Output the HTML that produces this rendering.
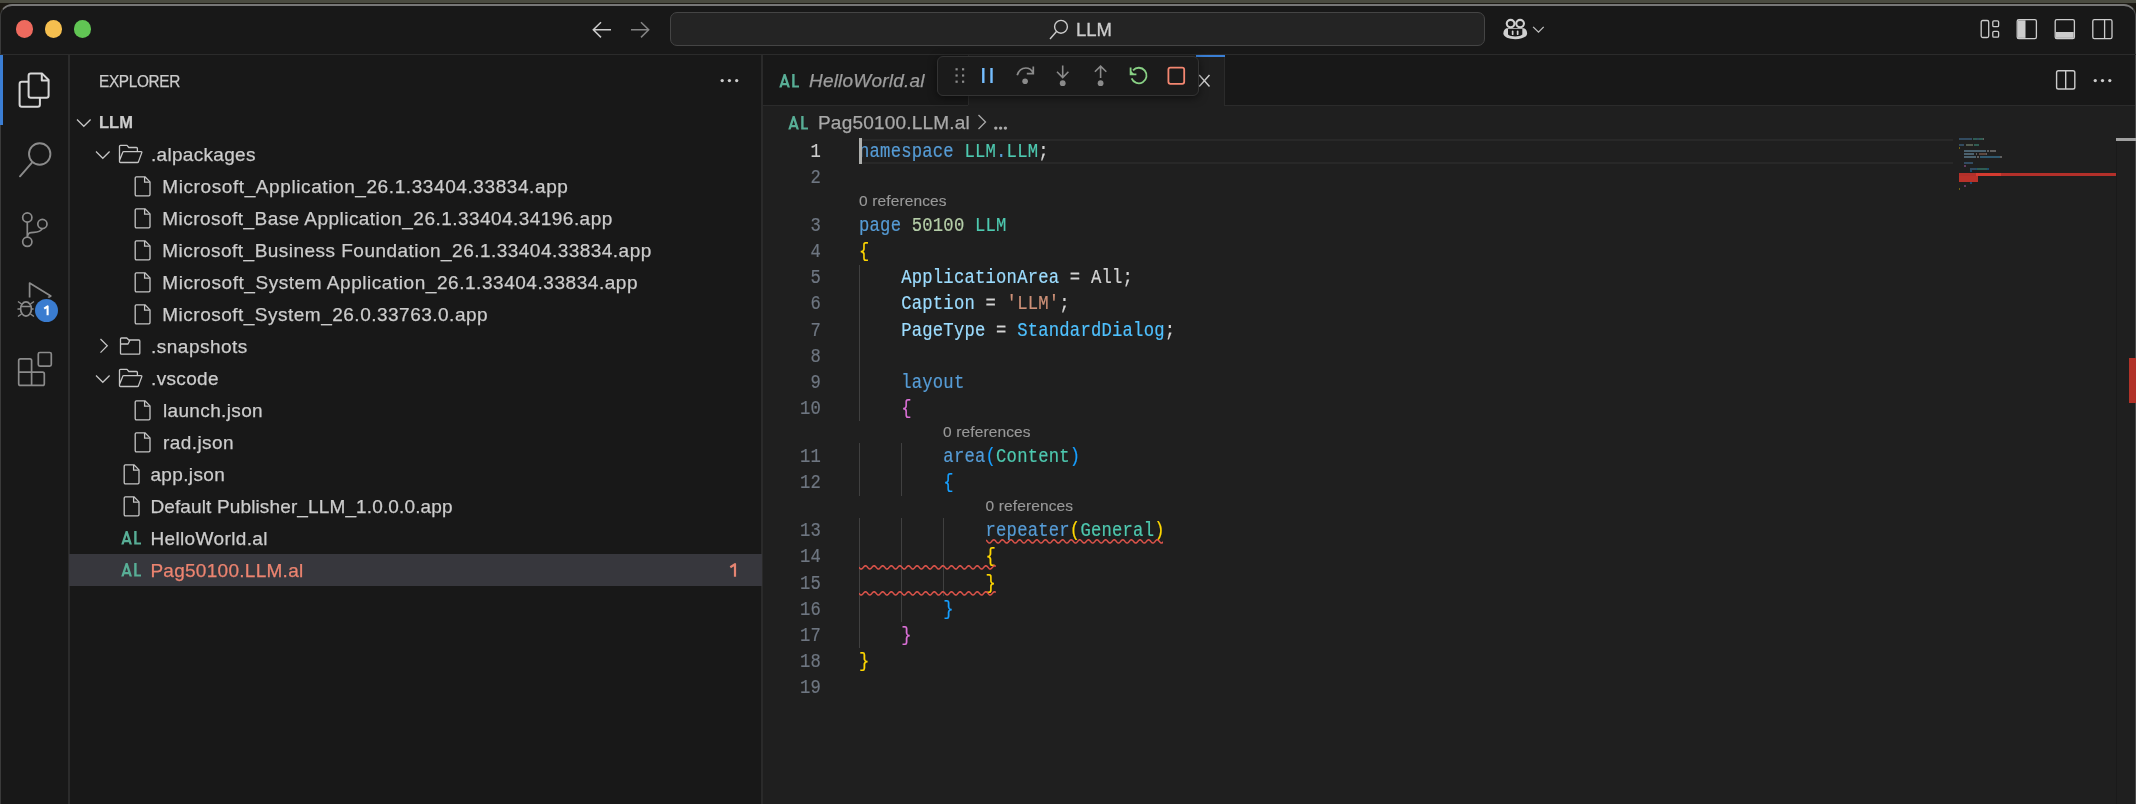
<!DOCTYPE html>
<html><head><meta charset="utf-8">
<style>
*{box-sizing:border-box;margin:0;padding:0}
html,body{width:2136px;height:804px;overflow:hidden;background:#4a4b40}
body{position:relative;font-family:"Liberation Sans",sans-serif;color:#cccccc}
.abs{position:absolute}
.etext{-webkit-text-stroke:0.25px currentColor;margin-top:0.6px;height:32px;line-height:32px;font-size:19px;letter-spacing:0.45px;white-space:nowrap;color:#cccccc}
.err{color:#ec8470}
.alsvg{fill:#58ae96}

#win{position:absolute;left:0;top:4px;width:2136px;height:820px;background:#181818;border-radius:12px 12px 0 0;border-top:2px solid #777777;border-left:1.5px solid #3a3a3a;border-right:1.5px solid #4a4a4a;overflow:hidden}
#edge{position:absolute;left:0;top:2.6px;width:2136px;height:14px;background:#1c1a14}
svg{position:absolute;overflow:visible}
.row{position:absolute;left:69px;width:693px;height:32px;line-height:32px;font-size:19px;letter-spacing:0.45px;white-space:nowrap;color:#cccccc}
.row span.t{position:absolute;top:0}
.code{-webkit-text-stroke:0.2px currentColor;position:absolute;left:0;height:26.13px;line-height:26.13px;margin-top:0.8px;font-family:"Liberation Mono",monospace;font-size:20px;letter-spacing:0.256px;white-space:pre;color:#d4d4d4;transform:scaleX(0.86);transform-origin:0 0}
.ln{-webkit-text-stroke:0.2px currentColor;position:absolute;left:721px;width:100px;text-align:right;height:26.13px;line-height:26.13px;margin-top:0.8px;font-family:"Liberation Mono",monospace;font-size:20px;letter-spacing:0.256px;color:#6e7681;transform:scaleX(0.86);transform-origin:100% 0}
.lens{-webkit-text-stroke:0.15px currentColor;position:absolute;height:22px;line-height:22px;margin-top:-0.3px;font-size:15.5px;letter-spacing:0.13px;color:#999999;white-space:nowrap}
.kw{color:#569cd6}.ty{color:#4ec9b0}.nu{color:#b5cea8}.pr{color:#9cdcfe}.st{color:#ce9178}.en{color:#4fc1ff}
.b1{color:#ffd700}.b2{color:#da70d6}.b3{color:#179fff}
.guide{position:absolute;width:1px;background:#404040}
.ln.act{color:#cccccc}
</style></head><body>
<div id="edge"></div>
<div id="win">
</div>
<div id="ui" class="abs" style="left:0;top:0;width:2136px;height:804px;will-change:transform">
  <!-- title bar border -->
  <div class="abs" style="left:0;top:54px;width:2136px;height:1px;background:#2b2b2b"></div>
  <!-- activity bar border -->
  <div class="abs" style="left:68px;top:55px;width:1.5px;height:749px;background:#2b2b2b"></div>
  <!-- sidebar border -->
  <div class="abs" style="left:761px;top:55px;width:2px;height:749px;background:#2a2a2a"></div>
  <!-- editor bg -->
  <div class="abs" style="left:763px;top:105px;width:1371.5px;height:699px;background:#1f1f1f"></div>
  <!-- tab bar bottom border -->
  <div class="abs" style="left:763px;top:105px;width:1371.5px;height:1px;background:#2b2b2b"></div>

  
  <!-- traffic lights -->
  <div class="abs" style="left:15.8px;top:20.2px;width:17.6px;height:17.6px;border-radius:50%;background:#ee6a5e"></div>
  <div class="abs" style="left:44.9px;top:20.2px;width:17.6px;height:17.6px;border-radius:50%;background:#f5bf4f"></div>
  <div class="abs" style="left:73.9px;top:20.2px;width:17.6px;height:17.6px;border-radius:50%;background:#61c554"></div>
  <!-- nav arrows -->
  <svg style="left:590px;top:20px" width="24" height="20" viewBox="0 0 24 20"><path d="M21 9.8H3.5M11 2.2L3.3 9.8L11 17.4" fill="none" stroke="#cccccc" stroke-width="1.5"/></svg>
  <svg style="left:628px;top:20px" width="24" height="20" viewBox="0 0 24 20"><path d="M3 9.8H20.5M13 2.2L20.7 9.8L13 17.4" fill="none" stroke="#858585" stroke-width="1.5"/></svg>
  <!-- search box -->
  <div class="abs" style="left:670px;top:12px;width:815px;height:34px;border-radius:7px;border:1px solid #454545;background:#242424"></div>
  <svg style="left:1046px;top:16.6px" width="24" height="26" viewBox="0 0 24 26"><circle cx="15" cy="9.8" r="6.4" fill="none" stroke="#cccccc" stroke-width="1.4"/><path d="M10.5 14.5L4 22" stroke="#cccccc" stroke-width="1.4"/></svg>
  <div class="abs" style="left:1076px;top:12.7px;height:34px;line-height:34px;font-size:18.5px;color:#cccccc;letter-spacing:-0.1px;-webkit-text-stroke:0.3px #cccccc">LLM</div>
  <!-- copilot -->
  <svg style="left:1500px;top:16px" width="50" height="26" viewBox="0 0 50 26">
    <path d="M6.50 12.30L23.80 12.30C26.00 13.00 27.10 15.00 27.10 17.50C27.10 21.00 21.50 23.20 15.30 23.20C9.00 23.20 3.40 21.00 3.40 17.50C3.40 15.00 4.50 13.00 6.50 12.30Z" fill="#d0d0d0"/>
    <path d="M8.00 13.10H22.30V18.50C20.50 20.00 18.00 20.40 15.20 20.40C12.40 20.40 9.80 20.00 8.00 18.50Z" fill="#181818"/>
    <rect x="11.80" y="14.60" width="1.7" height="4.5" rx="0.85" fill="#d0d0d0"/>
    <rect x="16.80" y="14.60" width="1.7" height="4.5" rx="0.85" fill="#d0d0d0"/>
    <ellipse cx="10.60" cy="7.60" rx="3.85" ry="3.7" fill="none" stroke="#d0d0d0" stroke-width="2.1"/>
    <ellipse cx="20.10" cy="7.60" rx="3.85" ry="3.7" fill="none" stroke="#d0d0d0" stroke-width="2.1"/>
    <path d="M33.10 10.90L38.50 16.10L43.70 10.90" fill="none" stroke="#c0c0c0" stroke-width="1.3"/>
  </svg>
  <!-- layout icons -->
  <svg style="left:1978px;top:17px" width="140" height="26" viewBox="0 0 140 26">
    <rect x="3.2" y="3.5" width="7.5" height="17" rx="1.5" fill="none" stroke="#cccccc" stroke-width="1.3"/>
    <rect x="14.8" y="3.8" width="5.8" height="5.8" rx="1.2" fill="none" stroke="#cccccc" stroke-width="1.3"/>
    <rect x="14.8" y="14.3" width="5.8" height="5.8" rx="1.2" fill="none" stroke="#cccccc" stroke-width="1.3"/>
    <rect x="39.2" y="2.6" width="19.2" height="19" rx="1.6" fill="none" stroke="#cccccc" stroke-width="1.3"/>
    <path d="M40 3.3H47.5V20.9H40Z" fill="#cccccc"/>
    <rect x="77.2" y="2.6" width="19.2" height="19" rx="1.6" fill="none" stroke="#cccccc" stroke-width="1.3"/>
    <path d="M77.9 15H95.7V20.9H77.9Z" fill="#cccccc"/>
    <rect x="114.8" y="2.6" width="19.2" height="19" rx="1.6" fill="none" stroke="#cccccc" stroke-width="1.3"/>
    <path d="M126.6 3V21" stroke="#cccccc" stroke-width="1.3"/>
  </svg>


  <!-- activity bar -->
  <div class="abs" style="left:0;top:55px;width:2.5px;height:70px;background:#3b7ed4"></div>
  <svg style="left:0;top:55px" width="68" height="360" viewBox="0 0 68 360">
    <!-- explorer -->
    <path d="M28.6 20.8C28.6 19.5 29.5 18.6 30.8 18.6H42.2L48.6 25V40.6C48.6 41.9 47.7 42.8 46.4 42.8H30.8C29.5 42.8 28.6 41.9 28.6 40.6Z" fill="none" stroke="#d7d7d7" stroke-width="2" stroke-linejoin="round"/>
    <path d="M41.8 18.9V25.4H48.3" fill="none" stroke="#d7d7d7" stroke-width="2" stroke-linejoin="round"/>
    <path d="M28.6 26.8H21.8C20.5 26.8 19.6 27.7 19.6 29V49.6C19.6 50.9 20.5 51.8 21.8 51.8H37.7C39 51.8 39.9 50.9 39.9 49.6V43" fill="none" stroke="#d7d7d7" stroke-width="2" stroke-linejoin="round"/>
    <!-- search -->
    <circle cx="39.7" cy="99" r="10.7" fill="none" stroke="#8b8b8b" stroke-width="1.9"/>
    <path d="M32.2 107.3L20 121.3" stroke="#8b8b8b" stroke-width="1.9" stroke-linecap="round"/>
    <!-- source control -->
    <circle cx="27.3" cy="162.5" r="4.6" fill="none" stroke="#8b8b8b" stroke-width="1.7"/>
    <circle cx="42.4" cy="169" r="4.6" fill="none" stroke="#8b8b8b" stroke-width="1.7"/>
    <circle cx="27.3" cy="186.8" r="4.6" fill="none" stroke="#8b8b8b" stroke-width="1.7"/>
    <path d="M27.3 167.1V182.2M27.3 182.2C28 177.5 30 177.3 34 177.3C38 177.3 40.5 176.5 42.3 173.6" fill="none" stroke="#8b8b8b" stroke-width="1.7"/>
    <!-- run and debug -->
    <path d="M29.6 242.5V228L50.8 241L48 242.7" fill="none" stroke="#8b8b8b" stroke-width="1.7" stroke-linejoin="round"/>
    <ellipse cx="26" cy="254" rx="5.4" ry="7.2" fill="none" stroke="#8b8b8b" stroke-width="1.7"/>
    <path d="M20.6 251.5H31.4M17.5 254H20.6M31.4 254H34.5M18 246.5L21.5 249M34 246.5L30.5 249M18 261.5L21.5 259M34 261.5L30.5 259" fill="none" stroke="#8b8b8b" stroke-width="1.5"/>
    <!-- extensions -->
    <path d="M18.7 317.2V305.5C18.7 304.5 19.4 303.8 20.4 303.8H29.9C30.9 303.8 31.6 304.5 31.6 305.5V317.2H42.6C43.6 317.2 44.3 317.9 44.3 318.9V328.7C44.3 329.7 43.6 330.4 42.6 330.4H20.4C19.4 330.4 18.7 329.7 18.7 328.7V317.2H31.6V330.4" fill="none" stroke="#8b8b8b" stroke-width="1.7" stroke-linejoin="round"/>
    <rect x="38.3" y="297.5" width="13" height="13.6" rx="1.6" fill="none" stroke="#8b8b8b" stroke-width="1.7"/>
  </svg>
  <div class="abs" style="left:35px;top:299px;width:23px;height:23px;border-radius:50%;background:#3a7cd0;box-shadow:0 0 0 1.5px #181818"></div><svg style="left:35px;top:299px" width="23" height="23" viewBox="0 0 23 23"><path d="M9.2 9.6L12.6 7.4V16.2" fill="none" stroke="#ffffff" stroke-width="2.1" stroke-linejoin="round"/></svg>


  <!-- sidebar -->
  <div class="abs" style="left:98.5px;top:66px;height:32px;line-height:32px;font-size:16.6px;letter-spacing:-0.36px;transform:scaleX(0.925);transform-origin:0 0;color:#cccccc;-webkit-text-stroke:0.25px #cccccc">EXPLORER</div>
  <svg style="left:718px;top:76px" width="24" height="8" viewBox="0 0 24 8"><circle cx="4.2" cy="4.55" r="1.65" fill="#cccccc"/><circle cx="11.4" cy="4.55" r="1.65" fill="#cccccc"/><circle cx="18.7" cy="4.55" r="1.65" fill="#cccccc"/></svg>
  <svg style="left:76.3px;top:117.8px" width="16" height="10" viewBox="0 0 16 10"><path d="M1 1.5L7.8 8.3L14.6 1.5" fill="none" stroke="#c5c5c5" stroke-width="1.25"/></svg>
  <div class="abs etext" style="left:99px;top:105.3px;font-weight:bold;font-size:16.5px;letter-spacing:0px">LLM</div>
  <svg style="left:95px;top:149.7px" width="16" height="10" viewBox="0 0 16 10"><path d="M1 1.5L7.8 8.3L14.6 1.5" fill="none" stroke="#c5c5c5" stroke-width="1.25"/></svg>
  <svg style="left:117px;top:144px" width="27" height="20" viewBox="0 0 27 20"><path d="M2.5 16.5V2.3C2.5 1.7 2.9 1.3 3.5 1.3H10L11.8 3.5H19.4C20 3.5 20.4 3.9 20.4 4.5V7.5M2.5 16.5L5.8 8.2C6 7.9 6.3 7.7 6.7 7.7H24.1C24.7 7.7 25 8.1 24.8 8.6L21.4 17.9C21.2 18.3 20.9 18.5 20.5 18.5H3.5C2.9 18.5 2.5 18.1 2.5 17.5Z" fill="none" stroke="#c5c5c5" stroke-width="1.3" stroke-linejoin="round"/></svg>
  <div class="abs etext " style="left:151.0px;top:138px;letter-spacing:0.310px">.alpackages</div>
  <svg style="left:134px;top:176px" width="18" height="22" viewBox="0 0 18 22"><path d="M1.2 2C1.2 1.3 1.7 0.8 2.4 0.8H10.9L16 5.9V18.6C16 19.3 15.5 19.8 14.8 19.8H2.4C1.7 19.8 1.2 19.3 1.2 18.6Z" fill="none" stroke="#c5c5c5" stroke-width="1.3" stroke-linejoin="round"/><path d="M10.6 1V6.2H15.8" fill="none" stroke="#c5c5c5" stroke-width="1.3"/></svg>
  <div class="abs etext " style="left:162.3px;top:170px;letter-spacing:0.591px">Microsoft_Application_26.1.33404.33834.app</div>
  <svg style="left:134px;top:208px" width="18" height="22" viewBox="0 0 18 22"><path d="M1.2 2C1.2 1.3 1.7 0.8 2.4 0.8H10.9L16 5.9V18.6C16 19.3 15.5 19.8 14.8 19.8H2.4C1.7 19.8 1.2 19.3 1.2 18.6Z" fill="none" stroke="#c5c5c5" stroke-width="1.3" stroke-linejoin="round"/><path d="M10.6 1V6.2H15.8" fill="none" stroke="#c5c5c5" stroke-width="1.3"/></svg>
  <div class="abs etext " style="left:162.3px;top:202px;letter-spacing:0.458px">Microsoft_Base Application_26.1.33404.34196.app</div>
  <svg style="left:134px;top:240px" width="18" height="22" viewBox="0 0 18 22"><path d="M1.2 2C1.2 1.3 1.7 0.8 2.4 0.8H10.9L16 5.9V18.6C16 19.3 15.5 19.8 14.8 19.8H2.4C1.7 19.8 1.2 19.3 1.2 18.6Z" fill="none" stroke="#c5c5c5" stroke-width="1.3" stroke-linejoin="round"/><path d="M10.6 1V6.2H15.8" fill="none" stroke="#c5c5c5" stroke-width="1.3"/></svg>
  <div class="abs etext " style="left:162.3px;top:234px;letter-spacing:0.472px">Microsoft_Business Foundation_26.1.33404.33834.app</div>
  <svg style="left:134px;top:272px" width="18" height="22" viewBox="0 0 18 22"><path d="M1.2 2C1.2 1.3 1.7 0.8 2.4 0.8H10.9L16 5.9V18.6C16 19.3 15.5 19.8 14.8 19.8H2.4C1.7 19.8 1.2 19.3 1.2 18.6Z" fill="none" stroke="#c5c5c5" stroke-width="1.3" stroke-linejoin="round"/><path d="M10.6 1V6.2H15.8" fill="none" stroke="#c5c5c5" stroke-width="1.3"/></svg>
  <div class="abs etext " style="left:162.3px;top:266px;letter-spacing:0.548px">Microsoft_System Application_26.1.33404.33834.app</div>
  <svg style="left:134px;top:304px" width="18" height="22" viewBox="0 0 18 22"><path d="M1.2 2C1.2 1.3 1.7 0.8 2.4 0.8H10.9L16 5.9V18.6C16 19.3 15.5 19.8 14.8 19.8H2.4C1.7 19.8 1.2 19.3 1.2 18.6Z" fill="none" stroke="#c5c5c5" stroke-width="1.3" stroke-linejoin="round"/><path d="M10.6 1V6.2H15.8" fill="none" stroke="#c5c5c5" stroke-width="1.3"/></svg>
  <div class="abs etext " style="left:162.3px;top:298px;letter-spacing:0.494px">Microsoft_System_26.0.33763.0.app</div>
  <svg style="left:98.8px;top:338.3px" width="10" height="16" viewBox="0 0 10 16"><path d="M1.5 1L8.3 7.8L1.5 14.6" fill="none" stroke="#c5c5c5" stroke-width="1.25"/></svg>
  <svg style="left:119px;top:337px" width="24" height="19" viewBox="0 0 24 19"><path d="M1.5 2C1.5 1.4 1.9 1 2.5 1H7.8L9.8 3H19.8C20.4 3 20.8 3.4 20.8 4V16.2C20.8 16.8 20.4 17.2 19.8 17.2H2.5C1.9 17.2 1.5 16.8 1.5 16.2ZM1.5 7H9L11 3" fill="none" stroke="#c5c5c5" stroke-width="1.3" stroke-linejoin="round"/></svg>
  <div class="abs etext " style="left:151.1px;top:330px;letter-spacing:0.468px">.snapshots</div>
  <svg style="left:95.2px;top:374px" width="16" height="10" viewBox="0 0 16 10"><path d="M1 1.5L7.8 8.3L14.6 1.5" fill="none" stroke="#c5c5c5" stroke-width="1.25"/></svg>
  <svg style="left:117px;top:368px" width="27" height="20" viewBox="0 0 27 20"><path d="M2.5 16.5V2.3C2.5 1.7 2.9 1.3 3.5 1.3H10L11.8 3.5H19.4C20 3.5 20.4 3.9 20.4 4.5V7.5M2.5 16.5L5.8 8.2C6 7.9 6.3 7.7 6.7 7.7H24.1C24.7 7.7 25 8.1 24.8 8.6L21.4 17.9C21.2 18.3 20.9 18.5 20.5 18.5H3.5C2.9 18.5 2.5 18.1 2.5 17.5Z" fill="none" stroke="#c5c5c5" stroke-width="1.3" stroke-linejoin="round"/></svg>
  <div class="abs etext " style="left:151.1px;top:362px;letter-spacing:0.315px">.vscode</div>
  <svg style="left:134px;top:400px" width="18" height="22" viewBox="0 0 18 22"><path d="M1.2 2C1.2 1.3 1.7 0.8 2.4 0.8H10.9L16 5.9V18.6C16 19.3 15.5 19.8 14.8 19.8H2.4C1.7 19.8 1.2 19.3 1.2 18.6Z" fill="none" stroke="#c5c5c5" stroke-width="1.3" stroke-linejoin="round"/><path d="M10.6 1V6.2H15.8" fill="none" stroke="#c5c5c5" stroke-width="1.3"/></svg>
  <div class="abs etext " style="left:162.9px;top:394px;letter-spacing:0.364px">launch.json</div>
  <svg style="left:134px;top:432px" width="18" height="22" viewBox="0 0 18 22"><path d="M1.2 2C1.2 1.3 1.7 0.8 2.4 0.8H10.9L16 5.9V18.6C16 19.3 15.5 19.8 14.8 19.8H2.4C1.7 19.8 1.2 19.3 1.2 18.6Z" fill="none" stroke="#c5c5c5" stroke-width="1.3" stroke-linejoin="round"/><path d="M10.6 1V6.2H15.8" fill="none" stroke="#c5c5c5" stroke-width="1.3"/></svg>
  <div class="abs etext " style="left:162.9px;top:426px;letter-spacing:0.439px">rad.json</div>
  <svg style="left:122.5px;top:464px" width="18" height="22" viewBox="0 0 18 22"><path d="M1.2 2C1.2 1.3 1.7 0.8 2.4 0.8H10.9L16 5.9V18.6C16 19.3 15.5 19.8 14.8 19.8H2.4C1.7 19.8 1.2 19.3 1.2 18.6Z" fill="none" stroke="#c5c5c5" stroke-width="1.3" stroke-linejoin="round"/><path d="M10.6 1V6.2H15.8" fill="none" stroke="#c5c5c5" stroke-width="1.3"/></svg>
  <div class="abs etext " style="left:150.4px;top:458px;letter-spacing:0.376px">app.json</div>
  <svg style="left:122.5px;top:496px" width="18" height="22" viewBox="0 0 18 22"><path d="M1.2 2C1.2 1.3 1.7 0.8 2.4 0.8H10.9L16 5.9V18.6C16 19.3 15.5 19.8 14.8 19.8H2.4C1.7 19.8 1.2 19.3 1.2 18.6Z" fill="none" stroke="#c5c5c5" stroke-width="1.3" stroke-linejoin="round"/><path d="M10.6 1V6.2H15.8" fill="none" stroke="#c5c5c5" stroke-width="1.3"/></svg>
  <div class="abs etext " style="left:150.4px;top:490px;letter-spacing:0.134px">Default Publisher_LLM_1.0.0.0.app</div>
  <svg class="alsvg" style="left:120.9px;top:531px" width="21" height="14" viewBox="0 0 21 14"><path fill-rule="evenodd" d="M0.2 13.5L4.7 0H6.6L11 13.5H8.6L7.8 11.2H3.4L2.6 13.5ZM4.1 8.9H7.1L5.6 4.3ZM13.2 0H15.6V11.5H20V13.5H13.2Z"/></svg>
  <div class="abs etext " style="left:150.4px;top:522px;letter-spacing:0.374px">HelloWorld.al</div>
  <div class="abs" style="left:69px;top:554px;width:693px;height:32px;background:#37373d"></div>
  <svg class="alsvg" style="left:120.9px;top:563px" width="21" height="14" viewBox="0 0 21 14"><path fill-rule="evenodd" d="M0.2 13.5L4.7 0H6.6L11 13.5H8.6L7.8 11.2H3.4L2.6 13.5ZM4.1 8.9H7.1L5.6 4.3ZM13.2 0H15.6V11.5H20V13.5H13.2Z"/></svg>
  <div class="abs etext err" style="left:150.4px;top:554px;letter-spacing:0.277px">Pag50100.LLM.al</div>
  <svg style="left:726px;top:560px" width="16" height="20" viewBox="0 0 16 20"><path d="M4.3 7.2L9 4.2V16.7" fill="none" stroke="#e48472" stroke-width="2.2" stroke-linejoin="round"/></svg>

  <!-- code -->
  <div class="abs" style="left:861px;top:138.5px;width:1092px;height:2px;background:#282828"></div>
  <div class="abs" style="left:861px;top:162px;width:1092px;height:2px;background:#282828"></div>
  <div class="guide" style="left:859px;top:264.52px;height:156.78px"></div>
  <div class="guide" style="left:859px;top:443.30px;height:52.26px"></div>
  <div class="guide" style="left:859px;top:517.56px;height:130.65px"></div>
  <div class="guide" style="left:901px;top:443.30px;height:52.26px"></div>
  <div class="guide" style="left:901px;top:517.56px;height:104.52px"></div>
  <div class="guide" style="left:943px;top:517.56px;height:78.39px"></div>
  <div class="ln act" style="top:138.00px">1</div>
  <div class="code" style="left:859px;top:138.00px"><span class="kw">namespace</span> <span class="ty">LLM</span><span class="kw">.</span><span class="ty">LLM</span>;</div>
  <div class="ln" style="top:164.13px">2</div>
  <div class="ln" style="top:212.26px">3</div>
  <div class="code" style="left:859px;top:212.26px"><span class="kw">page</span> <span class="nu">50100</span> <span class="ty">LLM</span></div>
  <div class="ln" style="top:238.39px">4</div>
  <div class="code" style="left:859px;top:238.39px"><span class="b1">{</span></div>
  <div class="ln" style="top:264.52px">5</div>
  <div class="code" style="left:859px;top:264.52px">    <span class="pr">ApplicationArea</span> = All;</div>
  <div class="ln" style="top:290.65px">6</div>
  <div class="code" style="left:859px;top:290.65px">    <span class="pr">Caption</span> = <span class="st">'LLM'</span>;</div>
  <div class="ln" style="top:316.78px">7</div>
  <div class="code" style="left:859px;top:316.78px">    <span class="pr">PageType</span> = <span class="en">StandardDialog</span>;</div>
  <div class="ln" style="top:342.91px">8</div>
  <div class="ln" style="top:369.04px">9</div>
  <div class="code" style="left:859px;top:369.04px">    <span class="kw">layout</span></div>
  <div class="ln" style="top:395.17px">10</div>
  <div class="code" style="left:859px;top:395.17px">    <span class="b2">{</span></div>
  <div class="ln" style="top:443.30px">11</div>
  <div class="code" style="left:859px;top:443.30px">        <span class="kw">area</span><span class="b3">(</span><span class="ty">Content</span><span class="b3">)</span></div>
  <div class="ln" style="top:469.43px">12</div>
  <div class="code" style="left:859px;top:469.43px">        <span class="b3">{</span></div>
  <div class="ln" style="top:517.56px">13</div>
  <div class="code" style="left:859px;top:517.56px">            <span class="kw">repeater</span><span class="b1">(</span><span class="ty">General</span><span class="b1">)</span></div>
  <div class="ln" style="top:543.69px">14</div>
  <div class="code" style="left:859px;top:543.69px">            <span class="b1">{</span></div>
  <div class="ln" style="top:569.82px">15</div>
  <div class="code" style="left:859px;top:569.82px">            <span class="b1">}</span></div>
  <div class="ln" style="top:595.95px">16</div>
  <div class="code" style="left:859px;top:595.95px">        <span class="b3">}</span></div>
  <div class="ln" style="top:622.08px">17</div>
  <div class="code" style="left:859px;top:622.08px">    <span class="b2">}</span></div>
  <div class="ln" style="top:648.21px">18</div>
  <div class="code" style="left:859px;top:648.21px"><span class="b1">}</span></div>
  <div class="ln" style="top:674.34px">19</div>
  <div class="lens" style="left:859px;top:190.26px">0 references</div>
  <div class="lens" style="left:943px;top:421.30px">0 references</div>
  <div class="lens" style="left:985.5px;top:495.56px">0 references</div>
  <div class="abs" style="left:859px;top:138px;width:2.5px;height:26px;background:#aeafad"></div>
  <svg style="overflow:hidden;left:985.5px;top:538.74px" width="177.5" height="5" viewBox="0 0 177.5 5"><path d="M0.0 1.02 L0.6 1.54 L1.2 2.22 L1.8 2.93 L2.4 3.55 L3.0 3.94 L3.6 4.05 L4.2 3.84 L4.8 3.36 L5.4 2.70 L6.0 1.98 L6.6 1.34 L7.2 0.91 L7.8 0.75 L8.4 0.91 L9.0 1.34 L9.6 1.98 L10.2 2.70 L10.8 3.36 L11.4 3.84 L12.0 4.05 L12.6 3.94 L13.2 3.55 L13.8 2.93 L14.4 2.22 L15.0 1.54 L15.6 1.02 L16.2 0.77 L16.8 0.82 L17.4 1.17 L18.0 1.75 L18.6 2.46 L19.2 3.15 L19.8 3.71 L20.4 4.01 L21.0 4.01 L21.6 3.71 L22.2 3.15 L22.8 2.46 L23.4 1.75 L24.0 1.17 L24.6 0.82 L25.2 0.77 L25.8 1.02 L26.4 1.54 L27.0 2.22 L27.6 2.93 L28.2 3.55 L28.8 3.94 L29.4 4.05 L30.0 3.84 L30.6 3.36 L31.2 2.70 L31.8 1.98 L32.4 1.34 L33.0 0.91 L33.6 0.75 L34.2 0.91 L34.8 1.34 L35.4 1.98 L36.0 2.70 L36.6 3.36 L37.2 3.84 L37.8 4.05 L38.4 3.94 L39.0 3.55 L39.6 2.93 L40.2 2.22 L40.8 1.54 L41.4 1.02 L42.0 0.77 L42.6 0.82 L43.2 1.17 L43.8 1.75 L44.4 2.46 L45.0 3.15 L45.6 3.71 L46.2 4.01 L46.8 4.01 L47.4 3.71 L48.0 3.15 L48.6 2.46 L49.2 1.75 L49.8 1.17 L50.4 0.82 L51.0 0.77 L51.6 1.02 L52.2 1.54 L52.8 2.22 L53.4 2.93 L54.0 3.55 L54.6 3.94 L55.2 4.05 L55.8 3.84 L56.4 3.36 L57.0 2.70 L57.6 1.98 L58.2 1.34 L58.8 0.91 L59.4 0.75 L60.0 0.91 L60.6 1.34 L61.2 1.98 L61.8 2.70 L62.4 3.36 L63.0 3.84 L63.6 4.05 L64.2 3.94 L64.8 3.55 L65.4 2.93 L66.0 2.22 L66.6 1.54 L67.2 1.02 L67.8 0.77 L68.4 0.82 L69.0 1.17 L69.6 1.75 L70.2 2.46 L70.8 3.15 L71.4 3.71 L72.0 4.01 L72.6 4.01 L73.2 3.71 L73.8 3.15 L74.4 2.46 L75.0 1.75 L75.6 1.17 L76.2 0.82 L76.8 0.77 L77.4 1.02 L78.0 1.54 L78.6 2.22 L79.2 2.93 L79.8 3.55 L80.4 3.94 L81.0 4.05 L81.6 3.84 L82.2 3.36 L82.8 2.70 L83.4 1.98 L84.0 1.34 L84.6 0.91 L85.2 0.75 L85.8 0.91 L86.4 1.34 L87.0 1.98 L87.6 2.70 L88.2 3.36 L88.8 3.84 L89.4 4.05 L90.0 3.94 L90.6 3.55 L91.2 2.93 L91.8 2.22 L92.4 1.54 L93.0 1.02 L93.6 0.77 L94.2 0.82 L94.8 1.17 L95.4 1.75 L96.0 2.46 L96.6 3.15 L97.2 3.71 L97.8 4.01 L98.4 4.01 L99.0 3.71 L99.6 3.15 L100.2 2.46 L100.8 1.75 L101.4 1.17 L102.0 0.82 L102.6 0.77 L103.2 1.02 L103.8 1.54 L104.4 2.22 L105.0 2.93 L105.6 3.55 L106.2 3.94 L106.8 4.05 L107.4 3.84 L108.0 3.36 L108.6 2.70 L109.2 1.98 L109.8 1.34 L110.4 0.91 L111.0 0.75 L111.6 0.91 L112.2 1.34 L112.8 1.98 L113.4 2.70 L114.0 3.36 L114.6 3.84 L115.2 4.05 L115.8 3.94 L116.4 3.55 L117.0 2.93 L117.6 2.22 L118.2 1.54 L118.8 1.02 L119.4 0.77 L120.0 0.82 L120.6 1.17 L121.2 1.75 L121.8 2.46 L122.4 3.15 L123.0 3.71 L123.6 4.01 L124.2 4.01 L124.8 3.71 L125.4 3.15 L126.0 2.46 L126.6 1.75 L127.2 1.17 L127.8 0.82 L128.4 0.77 L129.0 1.02 L129.6 1.54 L130.2 2.22 L130.8 2.93 L131.4 3.55 L132.0 3.94 L132.6 4.05 L133.2 3.84 L133.8 3.36 L134.4 2.70 L135.0 1.98 L135.6 1.34 L136.2 0.91 L136.8 0.75 L137.4 0.91 L138.0 1.34 L138.6 1.98 L139.2 2.70 L139.8 3.36 L140.4 3.84 L141.0 4.05 L141.6 3.94 L142.2 3.55 L142.8 2.93 L143.4 2.22 L144.0 1.54 L144.6 1.02 L145.2 0.77 L145.8 0.82 L146.4 1.17 L147.0 1.75 L147.6 2.46 L148.2 3.15 L148.8 3.71 L149.4 4.01 L150.0 4.01 L150.6 3.71 L151.2 3.15 L151.8 2.46 L152.4 1.75 L153.0 1.17 L153.6 0.82 L154.2 0.77 L154.8 1.02 L155.4 1.54 L156.0 2.22 L156.6 2.93 L157.2 3.55 L157.8 3.94 L158.4 4.05 L159.0 3.84 L159.6 3.36 L160.2 2.70 L160.8 1.98 L161.4 1.34 L162.0 0.91 L162.6 0.75 L163.2 0.91 L163.8 1.34 L164.4 1.98 L165.0 2.70 L165.6 3.36 L166.2 3.84 L166.8 4.05 L167.4 3.94 L168.0 3.55 L168.6 2.93 L169.2 2.22 L169.8 1.54 L170.4 1.02 L171.0 0.77 L171.6 0.82 L172.2 1.17 L172.8 1.75 L173.4 2.46 L174.0 3.15 L174.6 3.71 L175.2 4.01 L175.8 4.01 L176.4 3.71 L177.0 3.15 L177.6 2.46" fill="none" stroke="#d9534a" stroke-width="1.5" stroke-linejoin="round"/></svg>
  <svg style="overflow:hidden;left:859.0px;top:564.87px" width="136.5" height="5" viewBox="0 0 136.5 5"><path d="M0.0 2.34 L0.6 3.05 L1.2 3.63 L1.8 3.98 L2.4 4.03 L3.0 3.78 L3.6 3.26 L4.2 2.58 L4.8 1.87 L5.4 1.25 L6.0 0.86 L6.6 0.75 L7.2 0.96 L7.8 1.44 L8.4 2.10 L9.0 2.82 L9.6 3.46 L10.2 3.89 L10.8 4.05 L11.4 3.89 L12.0 3.46 L12.6 2.82 L13.2 2.10 L13.8 1.44 L14.4 0.96 L15.0 0.75 L15.6 0.86 L16.2 1.25 L16.8 1.87 L17.4 2.58 L18.0 3.26 L18.6 3.78 L19.2 4.03 L19.8 3.98 L20.4 3.63 L21.0 3.05 L21.6 2.34 L22.2 1.65 L22.8 1.09 L23.4 0.79 L24.0 0.79 L24.6 1.09 L25.2 1.65 L25.8 2.34 L26.4 3.05 L27.0 3.63 L27.6 3.98 L28.2 4.03 L28.8 3.78 L29.4 3.26 L30.0 2.58 L30.6 1.87 L31.2 1.25 L31.8 0.86 L32.4 0.75 L33.0 0.96 L33.6 1.44 L34.2 2.10 L34.8 2.82 L35.4 3.46 L36.0 3.89 L36.6 4.05 L37.2 3.89 L37.8 3.46 L38.4 2.82 L39.0 2.10 L39.6 1.44 L40.2 0.96 L40.8 0.75 L41.4 0.86 L42.0 1.25 L42.6 1.87 L43.2 2.58 L43.8 3.26 L44.4 3.78 L45.0 4.03 L45.6 3.98 L46.2 3.63 L46.8 3.05 L47.4 2.34 L48.0 1.65 L48.6 1.09 L49.2 0.79 L49.8 0.79 L50.4 1.09 L51.0 1.65 L51.6 2.34 L52.2 3.05 L52.8 3.63 L53.4 3.98 L54.0 4.03 L54.6 3.78 L55.2 3.26 L55.8 2.58 L56.4 1.87 L57.0 1.25 L57.6 0.86 L58.2 0.75 L58.8 0.96 L59.4 1.44 L60.0 2.10 L60.6 2.82 L61.2 3.46 L61.8 3.89 L62.4 4.05 L63.0 3.89 L63.6 3.46 L64.2 2.82 L64.8 2.10 L65.4 1.44 L66.0 0.96 L66.6 0.75 L67.2 0.86 L67.8 1.25 L68.4 1.87 L69.0 2.58 L69.6 3.26 L70.2 3.78 L70.8 4.03 L71.4 3.98 L72.0 3.63 L72.6 3.05 L73.2 2.34 L73.8 1.65 L74.4 1.09 L75.0 0.79 L75.6 0.79 L76.2 1.09 L76.8 1.65 L77.4 2.34 L78.0 3.05 L78.6 3.63 L79.2 3.98 L79.8 4.03 L80.4 3.78 L81.0 3.26 L81.6 2.58 L82.2 1.87 L82.8 1.25 L83.4 0.86 L84.0 0.75 L84.6 0.96 L85.2 1.44 L85.8 2.10 L86.4 2.82 L87.0 3.46 L87.6 3.89 L88.2 4.05 L88.8 3.89 L89.4 3.46 L90.0 2.82 L90.6 2.10 L91.2 1.44 L91.8 0.96 L92.4 0.75 L93.0 0.86 L93.6 1.25 L94.2 1.87 L94.8 2.58 L95.4 3.26 L96.0 3.78 L96.6 4.03 L97.2 3.98 L97.8 3.63 L98.4 3.05 L99.0 2.34 L99.6 1.65 L100.2 1.09 L100.8 0.79 L101.4 0.79 L102.0 1.09 L102.6 1.65 L103.2 2.34 L103.8 3.05 L104.4 3.63 L105.0 3.98 L105.6 4.03 L106.2 3.78 L106.8 3.26 L107.4 2.58 L108.0 1.87 L108.6 1.25 L109.2 0.86 L109.8 0.75 L110.4 0.96 L111.0 1.44 L111.6 2.10 L112.2 2.82 L112.8 3.46 L113.4 3.89 L114.0 4.05 L114.6 3.89 L115.2 3.46 L115.8 2.82 L116.4 2.10 L117.0 1.44 L117.6 0.96 L118.2 0.75 L118.8 0.86 L119.4 1.25 L120.0 1.87 L120.6 2.58 L121.2 3.26 L121.8 3.78 L122.4 4.03 L123.0 3.98 L123.6 3.63 L124.2 3.05 L124.8 2.34 L125.4 1.65 L126.0 1.09 L126.6 0.79 L127.2 0.79 L127.8 1.09 L128.4 1.65 L129.0 2.34 L129.6 3.05 L130.2 3.63 L130.8 3.98 L131.4 4.03 L132.0 3.78 L132.6 3.26 L133.2 2.58 L133.8 1.87 L134.4 1.25 L135.0 0.86 L135.6 0.75 L136.2 0.96 L136.8 1.44" fill="none" stroke="#d9534a" stroke-width="1.5" stroke-linejoin="round"/></svg>
  <svg style="overflow:hidden;left:859.0px;top:591.00px" width="136.5" height="5" viewBox="0 0 136.5 5"><path d="M0.0 2.34 L0.6 3.05 L1.2 3.63 L1.8 3.98 L2.4 4.03 L3.0 3.78 L3.6 3.26 L4.2 2.58 L4.8 1.87 L5.4 1.25 L6.0 0.86 L6.6 0.75 L7.2 0.96 L7.8 1.44 L8.4 2.10 L9.0 2.82 L9.6 3.46 L10.2 3.89 L10.8 4.05 L11.4 3.89 L12.0 3.46 L12.6 2.82 L13.2 2.10 L13.8 1.44 L14.4 0.96 L15.0 0.75 L15.6 0.86 L16.2 1.25 L16.8 1.87 L17.4 2.58 L18.0 3.26 L18.6 3.78 L19.2 4.03 L19.8 3.98 L20.4 3.63 L21.0 3.05 L21.6 2.34 L22.2 1.65 L22.8 1.09 L23.4 0.79 L24.0 0.79 L24.6 1.09 L25.2 1.65 L25.8 2.34 L26.4 3.05 L27.0 3.63 L27.6 3.98 L28.2 4.03 L28.8 3.78 L29.4 3.26 L30.0 2.58 L30.6 1.87 L31.2 1.25 L31.8 0.86 L32.4 0.75 L33.0 0.96 L33.6 1.44 L34.2 2.10 L34.8 2.82 L35.4 3.46 L36.0 3.89 L36.6 4.05 L37.2 3.89 L37.8 3.46 L38.4 2.82 L39.0 2.10 L39.6 1.44 L40.2 0.96 L40.8 0.75 L41.4 0.86 L42.0 1.25 L42.6 1.87 L43.2 2.58 L43.8 3.26 L44.4 3.78 L45.0 4.03 L45.6 3.98 L46.2 3.63 L46.8 3.05 L47.4 2.34 L48.0 1.65 L48.6 1.09 L49.2 0.79 L49.8 0.79 L50.4 1.09 L51.0 1.65 L51.6 2.34 L52.2 3.05 L52.8 3.63 L53.4 3.98 L54.0 4.03 L54.6 3.78 L55.2 3.26 L55.8 2.58 L56.4 1.87 L57.0 1.25 L57.6 0.86 L58.2 0.75 L58.8 0.96 L59.4 1.44 L60.0 2.10 L60.6 2.82 L61.2 3.46 L61.8 3.89 L62.4 4.05 L63.0 3.89 L63.6 3.46 L64.2 2.82 L64.8 2.10 L65.4 1.44 L66.0 0.96 L66.6 0.75 L67.2 0.86 L67.8 1.25 L68.4 1.87 L69.0 2.58 L69.6 3.26 L70.2 3.78 L70.8 4.03 L71.4 3.98 L72.0 3.63 L72.6 3.05 L73.2 2.34 L73.8 1.65 L74.4 1.09 L75.0 0.79 L75.6 0.79 L76.2 1.09 L76.8 1.65 L77.4 2.34 L78.0 3.05 L78.6 3.63 L79.2 3.98 L79.8 4.03 L80.4 3.78 L81.0 3.26 L81.6 2.58 L82.2 1.87 L82.8 1.25 L83.4 0.86 L84.0 0.75 L84.6 0.96 L85.2 1.44 L85.8 2.10 L86.4 2.82 L87.0 3.46 L87.6 3.89 L88.2 4.05 L88.8 3.89 L89.4 3.46 L90.0 2.82 L90.6 2.10 L91.2 1.44 L91.8 0.96 L92.4 0.75 L93.0 0.86 L93.6 1.25 L94.2 1.87 L94.8 2.58 L95.4 3.26 L96.0 3.78 L96.6 4.03 L97.2 3.98 L97.8 3.63 L98.4 3.05 L99.0 2.34 L99.6 1.65 L100.2 1.09 L100.8 0.79 L101.4 0.79 L102.0 1.09 L102.6 1.65 L103.2 2.34 L103.8 3.05 L104.4 3.63 L105.0 3.98 L105.6 4.03 L106.2 3.78 L106.8 3.26 L107.4 2.58 L108.0 1.87 L108.6 1.25 L109.2 0.86 L109.8 0.75 L110.4 0.96 L111.0 1.44 L111.6 2.10 L112.2 2.82 L112.8 3.46 L113.4 3.89 L114.0 4.05 L114.6 3.89 L115.2 3.46 L115.8 2.82 L116.4 2.10 L117.0 1.44 L117.6 0.96 L118.2 0.75 L118.8 0.86 L119.4 1.25 L120.0 1.87 L120.6 2.58 L121.2 3.26 L121.8 3.78 L122.4 4.03 L123.0 3.98 L123.6 3.63 L124.2 3.05 L124.8 2.34 L125.4 1.65 L126.0 1.09 L126.6 0.79 L127.2 0.79 L127.8 1.09 L128.4 1.65 L129.0 2.34 L129.6 3.05 L130.2 3.63 L130.8 3.98 L131.4 4.03 L132.0 3.78 L132.6 3.26 L133.2 2.58 L133.8 1.87 L134.4 1.25 L135.0 0.86 L135.6 0.75 L136.2 0.96 L136.8 1.44" fill="none" stroke="#d9534a" stroke-width="1.5" stroke-linejoin="round"/></svg>

  <!-- minimap -->
  <div class="abs" style="left:1958.70px;top:138px;width:12.87px;height:2px;background:#569cd6;opacity:0.36"></div>
  <div class="abs" style="left:1973.00px;top:138px;width:4.29px;height:2px;background:#4ec9b0;opacity:0.36"></div>
  <div class="abs" style="left:1977.29px;top:138px;width:1.43px;height:2px;background:#569cd6;opacity:0.36"></div>
  <div class="abs" style="left:1978.72px;top:138px;width:4.29px;height:2px;background:#4ec9b0;opacity:0.36"></div>
  <div class="abs" style="left:1983.01px;top:138px;width:1.43px;height:2px;background:#d4d4d4;opacity:0.36"></div>
  <div class="abs" style="left:1958.70px;top:144px;width:5.72px;height:2px;background:#569cd6;opacity:0.36"></div>
  <div class="abs" style="left:1965.85px;top:144px;width:7.15px;height:2px;background:#b5cea8;opacity:0.36"></div>
  <div class="abs" style="left:1974.43px;top:144px;width:4.29px;height:2px;background:#4ec9b0;opacity:0.36"></div>
  <div class="abs" style="left:1958.70px;top:147px;width:1.43px;height:2px;background:#ffd700;opacity:0.36"></div>
  <div class="abs" style="left:1964.42px;top:150px;width:21.45px;height:2px;background:#9cdcfe;opacity:0.36"></div>
  <div class="abs" style="left:1987.30px;top:150px;width:1.43px;height:2px;background:#d4d4d4;opacity:0.36"></div>
  <div class="abs" style="left:1990.16px;top:150px;width:5.72px;height:2px;background:#d4d4d4;opacity:0.36"></div>
  <div class="abs" style="left:1964.42px;top:153px;width:10.01px;height:2px;background:#9cdcfe;opacity:0.36"></div>
  <div class="abs" style="left:1975.86px;top:153px;width:1.43px;height:2px;background:#d4d4d4;opacity:0.36"></div>
  <div class="abs" style="left:1978.72px;top:153px;width:7.15px;height:2px;background:#ce9178;opacity:0.36"></div>
  <div class="abs" style="left:1985.87px;top:153px;width:1.43px;height:2px;background:#d4d4d4;opacity:0.36"></div>
  <div class="abs" style="left:1964.42px;top:156px;width:11.44px;height:2px;background:#9cdcfe;opacity:0.36"></div>
  <div class="abs" style="left:1977.29px;top:156px;width:1.43px;height:2px;background:#d4d4d4;opacity:0.36"></div>
  <div class="abs" style="left:1980.15px;top:156px;width:20.02px;height:2px;background:#4fc1ff;opacity:0.36"></div>
  <div class="abs" style="left:2000.17px;top:156px;width:1.43px;height:2px;background:#d4d4d4;opacity:0.36"></div>
  <div class="abs" style="left:1964.42px;top:162px;width:8.58px;height:2px;background:#569cd6;opacity:0.36"></div>
  <div class="abs" style="left:1964.42px;top:165px;width:1.43px;height:2px;background:#da70d6;opacity:0.36"></div>
  <div class="abs" style="left:1970.14px;top:168px;width:5.72px;height:2px;background:#569cd6;opacity:0.36"></div>
  <div class="abs" style="left:1975.86px;top:168px;width:1.43px;height:2px;background:#179fff;opacity:0.36"></div>
  <div class="abs" style="left:1977.29px;top:168px;width:10.01px;height:2px;background:#4ec9b0;opacity:0.36"></div>
  <div class="abs" style="left:1987.30px;top:168px;width:1.43px;height:2px;background:#179fff;opacity:0.36"></div>
  <div class="abs" style="left:1970.14px;top:170px;width:1.43px;height:2px;background:#179fff;opacity:0.36"></div>
  <div class="abs" style="left:1975.86px;top:173px;width:11.44px;height:2px;background:#569cd6;opacity:0.36"></div>
  <div class="abs" style="left:1987.30px;top:173px;width:1.43px;height:2px;background:#ffd700;opacity:0.36"></div>
  <div class="abs" style="left:1988.73px;top:173px;width:10.01px;height:2px;background:#4ec9b0;opacity:0.36"></div>
  <div class="abs" style="left:1998.74px;top:173px;width:1.43px;height:2px;background:#ffd700;opacity:0.36"></div>
  <div class="abs" style="left:1975.86px;top:176px;width:1.43px;height:2px;background:#ffd700;opacity:0.36"></div>
  <div class="abs" style="left:1975.86px;top:179px;width:1.43px;height:2px;background:#ffd700;opacity:0.36"></div>
  <div class="abs" style="left:1970.14px;top:182px;width:1.43px;height:2px;background:#179fff;opacity:0.36"></div>
  <div class="abs" style="left:1964.42px;top:185px;width:1.43px;height:2px;background:#da70d6;opacity:0.36"></div>
  <div class="abs" style="left:1958.70px;top:188px;width:1.43px;height:2px;background:#ffd700;opacity:0.36"></div>
  <div class="abs" style="left:1958.7px;top:173.1px;width:157.3px;height:2.9px;background:#b3302a"></div>
  <div class="abs" style="left:1976px;top:173.1px;width:25px;height:2.9px;background:#d53b30"></div>
  <div class="abs" style="left:1958.7px;top:176px;width:19px;height:5.8px;background:#b9322a"></div>
  <div class="abs" style="left:2116px;top:138.4px;width:1px;height:666px;background:#1a1a1a"></div>
  <div class="abs" style="left:2116px;top:138.4px;width:20px;height:2.7px;background:#a0a0a0"></div>
  <div class="abs" style="left:2129.2px;top:358.4px;width:7px;height:45px;background:#b23228"></div>

  <!-- editor -->
  <div class="abs" style="left:968px;top:55px;width:257px;height:51px;background:#1f1f1f;border-right:1px solid #2b2b2b"></div>
  <div class="abs" style="left:1196px;top:55px;width:28.5px;height:1.6px;background:#3a7fd5"></div>
  <div class="abs" style="left:968px;top:55px;width:1px;height:50px;background:#2b2b2b"></div>
  <svg class="alsvg" style="left:779px;top:73.8px" width="21" height="14" viewBox="0 0 21 14"><path fill-rule="evenodd" d="M0.2 13.5L4.7 0H6.6L11 13.5H8.6L7.8 11.2H3.4L2.6 13.5ZM4.1 8.9H7.1L5.6 4.3ZM13.2 0H15.6V11.5H20V13.5H13.2Z"/></svg>
  <div class="abs etext" style="left:809px;top:64.2px;font-style:italic;color:#9d9d9d;letter-spacing:0.2px">HelloWorld.al</div>
  <svg style="left:1196px;top:72px" width="16" height="16" viewBox="0 0 16 16"><path d="M3.2 3L13.5 14.5M13.5 3L3.2 14.5" stroke="#d0d0d0" stroke-width="1.4"/></svg>
  <div class="abs" style="left:937px;top:56px;width:262px;height:40px;border-radius:6px;background:#1b1b1b;border:1px solid #333;box-shadow:0 2px 8px rgba(0,0,0,0.5)"></div>
  <svg style="left:937px;top:56px" width="262" height="40" viewBox="0 0 262 40">
  <g fill="#8b8b8b"><rect x="18.5" y="12.2" width="2.2" height="2.2"/><rect x="25" y="12.2" width="2.2" height="2.2"/><rect x="18.5" y="18.4" width="2.2" height="2.2"/><rect x="25" y="18.4" width="2.2" height="2.2"/><rect x="18.5" y="24.6" width="2.2" height="2.2"/><rect x="25" y="24.6" width="2.2" height="2.2"/></g>
  <path d="M46.3 12V27M54.5 12V27" stroke="#75beff" stroke-width="2.4"/>
  <path d="M80.2 19.2C81.6 14.6 84.6 12 88.8 12C92 12 94.6 13.8 96.1 16.9M96.3 10.6V17.6H89.8" fill="none" stroke="#8b8b8b" stroke-width="1.7"/>
  <circle cx="88.1" cy="25.3" r="2.8" fill="#8b8b8b"/>
  <path d="M125.7 9.5V21M120 15.8L125.7 21.5L131.4 15.8" fill="none" stroke="#8b8b8b" stroke-width="1.6"/>
  <circle cx="125.7" cy="27.2" r="2.9" fill="#8b8b8b"/>
  <path d="M163.6 22V10.2M157.9 15.8L163.6 10.1L169.3 15.8" fill="none" stroke="#8b8b8b" stroke-width="1.6"/>
  <circle cx="163.6" cy="27.2" r="2.9" fill="#8b8b8b"/>
  <path d="M196.04 14.31A7.75 7.75 0 1 1 194.61 22.40" fill="none" stroke="#89d185" stroke-width="1.8"/><path d="M193.6 11.6V18.3H199.4" fill="none" stroke="#89d185" stroke-width="1.8"/><path d="M193.6 14.6V18.3H197.3Z" fill="#89d185"/>
  <rect x="231.4" y="11.6" width="15.8" height="16.2" rx="2" fill="none" stroke="#f48771" stroke-width="1.8"/>
</svg>
  <svg style="left:2054px;top:69px" width="24" height="22" viewBox="0 0 24 22"><rect x="2.6" y="1.8" width="18.2" height="18.2" rx="1.8" fill="none" stroke="#cccccc" stroke-width="1.4"/><path d="M11.7 2V20" stroke="#cccccc" stroke-width="1.4"/></svg>
  <svg style="left:2090px;top:76px" width="24" height="8" viewBox="0 0 24 8"><circle cx="5.25" cy="4.55" r="1.65" fill="#cccccc"/><circle cx="12.5" cy="4.55" r="1.65" fill="#cccccc"/><circle cx="19.8" cy="4.55" r="1.65" fill="#cccccc"/></svg>
  <svg class="alsvg" style="left:788px;top:116px" width="21" height="14" viewBox="0 0 21 14"><path fill-rule="evenodd" d="M0.2 13.5L4.7 0H6.6L11 13.5H8.6L7.8 11.2H3.4L2.6 13.5ZM4.1 8.9H7.1L5.6 4.3ZM13.2 0H15.6V11.5H20V13.5H13.2Z"/></svg>
  <div class="abs etext" style="left:818px;top:106px;letter-spacing:0.2px;color:#a9a9a9">Pag50100.LLM.al</div>
  <svg style="left:975px;top:113px" width="14" height="18" viewBox="0 0 14 18"><path d="M3.5 2L10.5 9L3.5 16" fill="none" stroke="#a9a9a9" stroke-width="1.3"/></svg>
  <svg style="left:990px;top:124px" width="20" height="8" viewBox="0 0 20 8"><circle cx="5.8" cy="4.1" r="1.7" fill="#a9a9a9"/><circle cx="10.6" cy="4.1" r="1.7" fill="#a9a9a9"/><circle cx="15.4" cy="4.1" r="1.7" fill="#a9a9a9"/></svg>

</div>
</body></html>
